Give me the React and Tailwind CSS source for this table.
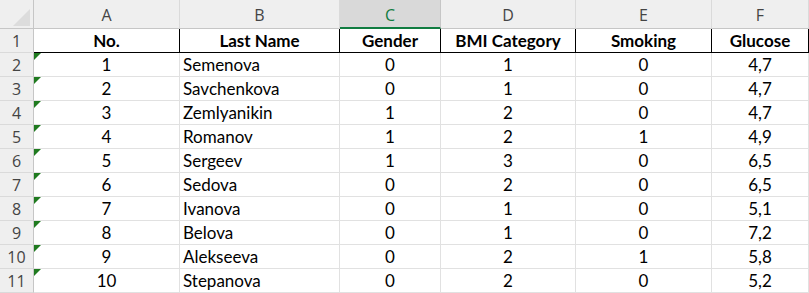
import React from "react";

const columns = [
  { letter: "A", title: "No.", align: "center" },
  { letter: "B", title: "Last Name", align: "left" },
  { letter: "C", title: "Gender", align: "center", selected: true },
  { letter: "D", title: "BMI Category", align: "center" },
  { letter: "E", title: "Smoking", align: "center" },
  { letter: "F", title: "Glucose", align: "center" },
];

const rows = [
  ["1", "Semenova", "0", "1", "0", "4,7"],
  ["2", "Savchenkova", "0", "1", "0", "4,7"],
  ["3", "Zemlyanikin", "1", "2", "0", "4,7"],
  ["4", "Romanov", "1", "2", "1", "4,9"],
  ["5", "Sergeev", "1", "3", "0", "6,5"],
  ["6", "Sedova", "0", "2", "0", "6,5"],
  ["7", "Ivanova", "0", "1", "0", "5,1"],
  ["8", "Belova", "0", "1", "0", "7,2"],
  ["9", "Alekseeva", "0", "2", "1", "5,8"],
  ["10", "Stepanova", "0", "2", "0", "5,2"],
];

const grid =
  "grid grid-cols-[34px_146px_160px_101px_135px_136px_97px] grid-rows-[29px_repeat(11,24px)]";

const headFont = { fontFamily: "'Open Sans', sans-serif" };

// little green "number stored as text" marker
const TextFlag = () => (
  <svg className="absolute left-0 top-0" width="7" height="7" viewBox="0 0 7 7">
    <polygon points="0,0 7,0 0,7" fill="#1f7a1f" />
  </svg>
);

const App = () => {
  return (
    <div
      className={`${grid} w-[809px] h-[293px] overflow-hidden bg-white text-[17px] leading-none text-black`}
      style={{ fontFamily: "Lato, 'Liberation Sans', sans-serif" }}
    >
      {/* corner */}
      <div className="relative bg-[#efefef] border-r border-b border-[#c6c6c6]">
        <svg className="absolute left-[13px] top-[9px]" width="17" height="17" viewBox="0 0 17 17">
          <polygon points="17,0 17,17 0,17" fill="#dcdcdc" />
        </svg>
      </div>

      {/* column letters */}
      {columns.map((c) =>
        c.selected ? (
          <div
            key={c.letter}
            className="flex items-center justify-center pt-[2px] bg-[#d9d9d9] border-r border-[#c6c6c6] border-b-2 border-b-[#107c41] text-[#107c41] text-[16px]"
            style={headFont}
          >
            {c.letter}
          </div>
        ) : (
          <div
            key={c.letter}
            className="flex items-center justify-center pt-[2px] bg-[#efefef] border-r border-b border-[#dadada] border-b-[#c6c6c6] text-[#444] text-[16px]"
            style={headFont}
          >
            {c.letter}
          </div>
        )
      )}

      {/* row 1: headings */}
      <div
        className="flex items-center justify-center bg-[#efefef] border-r border-b border-[#c6c6c6] border-b-[#dadada] text-[#444] text-[16px]"
        style={headFont}
      >
        1
      </div>
      {columns.map((c) => (
        <div
          key={c.title}
          className="flex items-center justify-center font-bold border-r border-b border-black"
        >
          {c.title}
        </div>
      ))}

      {/* data rows */}
      {rows.map((r, i) => (
        <React.Fragment key={i}>
          <div
            className="flex items-center justify-center bg-[#efefef] border-r border-b border-[#c6c6c6] border-b-[#dadada] text-[#444] text-[16px]"
            style={headFont}
          >
            {i + 2}
          </div>
          {r.map((v, j) => (
            <div
              key={j}
              className={`relative flex items-center border-r border-b border-[#e1e1e1] ${
                j === 1 ? "justify-start pl-[3px]" : "justify-center"
              }`}
            >
              {j === 0 && <TextFlag />}
              {v}
            </div>
          ))}
        </React.Fragment>
      ))}
    </div>
  );
};

export default App;
